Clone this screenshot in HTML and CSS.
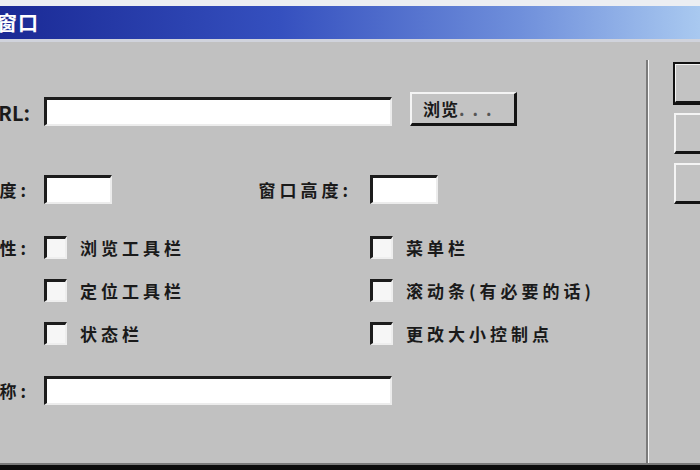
FILE: index.html
```html
<!DOCTYPE html>
<html lang="zh-CN">
<head>
    <meta charset="UTF-8">
    <title>打开浏览器窗口</title>
    <link rel="stylesheet" href="styles.css">
</head>
<body>

<div class="dialog">
    <div class="titlebar">
        <span class="title">打开浏览器窗口</span>
    </div>

    <div class="content">
        <form class="form">
            <!-- URL row -->
            <div class="row row-url">
                <label class="label">要显示的 <span class="latin">URL:</span></label>
                <input type="text" class="field field-wide">
                <button type="button" class="btn btn-browse">浏览<span class="dots">...</span></button>
            </div>

            <!-- size row -->
            <div class="row row-size">
                <label class="label">窗口宽度:</label>
                <input type="text" class="field field-small">
                <label class="label label-inner">窗口高度:</label>
                <input type="text" class="field field-small">
            </div>

            <!-- attributes -->
            <div class="row row-attrs">
                <span class="label label-top">属性:</span>
                <div class="checks">
                    <label class="check"><input type="checkbox"><span>浏览工具栏</span></label>
                    <label class="check"><input type="checkbox"><span>菜单栏</span></label>
                    <label class="check"><input type="checkbox"><span>定位工具栏</span></label>
                    <label class="check"><input type="checkbox"><span>滚动条(有必要的话)</span></label>
                    <label class="check"><input type="checkbox"><span>状态栏</span></label>
                    <label class="check"><input type="checkbox"><span>更改大小控制点</span></label>
                </div>
            </div>

            <!-- name row -->
            <div class="row row-name">
                <label class="label">窗口名称:</label>
                <input type="text" class="field field-wide">
            </div>
        </form>

        <div class="divider"></div>

        <div class="actions">
            <button type="button" class="btn btn-default">确定</button>
            <button type="button" class="btn">取消</button>
            <button type="button" class="btn">帮助</button>
        </div>
    </div>
</div>

</body>
</html>
```

FILE: styles.css
```css
html, body {
    margin: 0;
    padding: 0;
    height: 470px;
    overflow: hidden;
    background-color: #c0c0c0;
    font-family: "Noto Sans CJK SC", "Liberation Sans", sans-serif;
    color: #1a1a1a;
}

/* dialog is wider than the window, left part is cut off */
.dialog {
    margin-left: -140px;
    width: 1000px;
    height: 470px;
    box-sizing: border-box;
    border-top: 6px solid #eceef2;
    background-color: #c1c1c1;
    display: flex;
    flex-direction: column;
}

.titlebar {
    height: 33px;
    flex: none;
    border-bottom: 3px solid #d0d3dc;
    background: linear-gradient(to right, #0d1a82 0px, #1c2c98 160px, #3550bf 420px, #6f8fdb 660px, #a9c9f0 840px);
    display: flex;
    align-items: center;
}

.title {
    width: 179px;
    text-align: right;
    white-space: nowrap;
    color: #fff;
    font-size: 20px;
    font-weight: bold;
    letter-spacing: 1px;
}

.content {
    flex: 1;
    display: flex;
    box-shadow: inset 0 -5px 0 #0c0c0c, inset 0 -7px 0 #7a7a7a;
}

.form {
    width: 786px;
    flex: none;
    padding-top: 50px;
    display: flex;
    flex-direction: column;
}

.row {
    display: flex;
    align-items: center;
}

.label {
    width: 170px;
    flex: none;
    margin-right: 14px;
    text-align: right;
    white-space: nowrap;
    font-size: 17px;
    font-weight: bold;
    letter-spacing: 4px;
}

.latin {
    font-size: 20px;
    letter-spacing: 0;
}

.field {
    box-sizing: border-box;
    height: 29px;
    margin: 0;
    padding: 0;
    background-color: #fff;
    border-style: solid;
    border-width: 3px 2px 2px 3px;
    border-color: #1c1c1c #ececec #ececec #1c1c1c;
    outline: none;
}

.field-wide {
    width: 348px;
}

.field-small {
    width: 68px;
}

.btn {
    box-sizing: border-box;
    margin: 0;
    padding: 0;
    background-color: #c3c3c3;
    border-style: solid;
    border-width: 2px 3px 3px 2px;
    border-color: #f4f4f4 #141414 #141414 #f4f4f4;
    font-family: "Noto Sans CJK SC", sans-serif;
    font-size: 17px;
    font-weight: bold;
    color: #1a1a1a;
}

/* URL row */
.row-url {
    align-items: flex-start;
}

.row-url .label {
    margin-top: 6px;
}

.row-url .field {
    margin-top: 5px;
}

.btn-browse {
    width: 107px;
    height: 34px;
    margin-left: 18px;
    padding-left: 11px;
    text-align: left;
    letter-spacing: 1px;
}

.dots {
    color: #555;
    letter-spacing: 8px;
}

/* size row */
.row-size {
    margin-top: 48px;
}

.label-inner {
    width: 240px;
    margin-right: 18px;
}

/* attributes */
.row-attrs {
    margin-top: 32px;
    align-items: flex-start;
}

.label-top {
    line-height: 23px;
}

.checks {
    display: grid;
    grid-template-columns: 326px auto;
    row-gap: 20px;
}

.check {
    display: flex;
    align-items: center;
    gap: 13px;
    height: 23px;
    font-size: 17px;
    font-weight: bold;
    letter-spacing: 4px;
    white-space: nowrap;
}

.check input {
    appearance: none;
    -webkit-appearance: none;
    box-sizing: border-box;
    width: 23px;
    height: 23px;
    margin: 0;
    background-color: #f6f6f6;
    border-style: solid;
    border-width: 3px 2px 2px 3px;
    border-color: #1c1c1c #eeeeee #eeeeee #1c1c1c;
}

/* name row */
.row-name {
    margin-top: 31px;
}

.divider {
    width: 0;
    margin: 18px 0 7px;
    border-left: 2px solid #7b7b7b;
    border-right: 1px solid #fafafa;
}

.actions {
    margin-left: 25px;
    padding-top: 21px;
    display: flex;
    flex-direction: column;
    gap: 9px;
}

/* button captions sit past the right edge of the window */
.actions .btn {
    width: 120px;
    height: 41px;
}

.btn-default {
    outline: 2px solid #111;
    outline-offset: -1px;
}
```
